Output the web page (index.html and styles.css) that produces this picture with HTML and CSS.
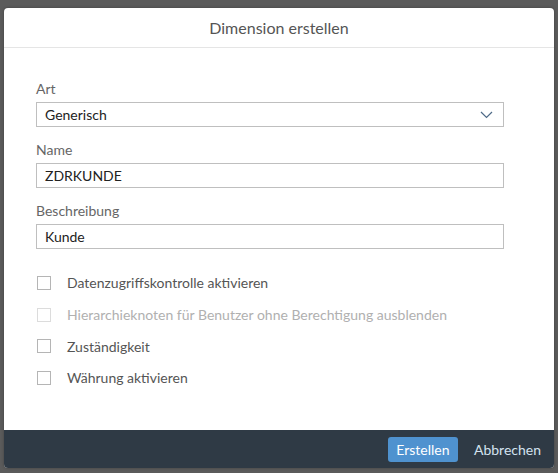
FILE: index.html
```html
<!DOCTYPE html>
<html lang="de">
<head>
<meta charset="utf-8">
<title>Dimension erstellen</title>
<link rel="stylesheet" href="styles.css">
</head>
<body>
<div class="dialog">
  <header class="dlg-header">Dimension erstellen</header>
  <main class="dlg-body">
    <div class="field first">
      <label class="lbl">Art</label>
      <div class="input select"><span>Generisch</span>
        <svg class="chev" width="13" height="8" viewBox="0 0 13 8"><path d="M1 1 L6.5 6.5 L12 1" fill="none" stroke="#4f6b88" stroke-width="1.2"/></svg>
      </div>
    </div>
    <div class="field">
      <label class="lbl">Name</label>
      <div class="input">ZDRKUNDE</div>
    </div>
    <div class="field">
      <label class="lbl">Beschreibung</label>
      <div class="input">Kunde</div>
    </div>
    <div class="checks">
      <div class="check"><span class="box"></span><span>Datenzugriffskontrolle aktivieren</span></div>
      <div class="check disabled"><span class="box"></span><span>Hierarchieknoten für Benutzer ohne Berechtigung ausblenden</span></div>
      <div class="check"><span class="box"></span><span>Zuständigkeit</span></div>
      <div class="check"><span class="box"></span><span>Währung aktivieren</span></div>
    </div>
  </main>
  <footer class="dlg-footer">
    <button class="btn primary">Erstellen</button>
    <button class="btn ghost">Abbrechen</button>
  </footer>
</div>
</body>
</html>
```
FILE: styles.css
```css
html, body {
  margin: 0;
  padding: 0;
  height: 100%;
}
body {
  background: #5b5b5b;
  font-family: Lato, "Noto Sans", "Liberation Sans", sans-serif;
  padding: 8px 4px 5px 4px;
  box-sizing: border-box;
}
.dialog {
  width: 550px;
  height: 460px;
  background: #fff;
  border-radius: 4px;
  overflow: hidden;
  display: flex;
  flex-direction: column;
  box-shadow: 0 0 3px rgba(0,0,0,0.3);
}
.dlg-header {
  height: 39px;
  border-bottom: 1px solid #e5e5e5;
  display: flex;
  align-items: center;
  justify-content: center;
  font-size: 16px;
  color: #555;
}
.dlg-body {
  flex: 1;
  padding: 18px 50px 0 32px;
}
.field {
  margin-top: 14px;
}
.lbl {
  display: block;
  font-size: 14px;
  line-height: 18px;
  color: #666;
  margin-bottom: 4px;
}
.input {
  height: 25px;
  box-sizing: border-box;
  border: 1px solid #bfbfbf;
  padding: 0 8px;
  font-size: 14px;
  color: #222;
  display: flex;
  align-items: center;
}
.select {
  justify-content: space-between;
}
.chev {
  margin-right: 2px;
}
.checks {
  margin-top: 18px;
}
.check {
  height: 31.7px;
  display: flex;
  align-items: center;
  font-size: 14px;
  color: #555;
}
.box {
  width: 14px;
  height: 14px;
  box-sizing: border-box;
  border: 1px solid #b5b5b5;
  margin-left: 1px;
  margin-right: 16px;
  background: #fff;
}
.check.disabled {
  color: #b0b0b0;
}
.check.disabled .box {
  border-color: #dcdcdc;
}
.dlg-footer {
  height: 38px;
  background: #2f3a45;
  display: flex;
  align-items: center;
  justify-content: flex-end;
  gap: 8px;
  padding-right: 5px;
}
.btn {
  font-family: inherit;
  font-size: 14px;
  height: 25px;
  border: none;
  border-radius: 3px;
  padding: 0 8px;
  cursor: pointer;
}
.btn.primary {
  background: #4f92cf;
  color: #fff;
  width: 70px;
}
.btn.ghost {
  background: transparent;
  color: #d3e2f0;
}
```
